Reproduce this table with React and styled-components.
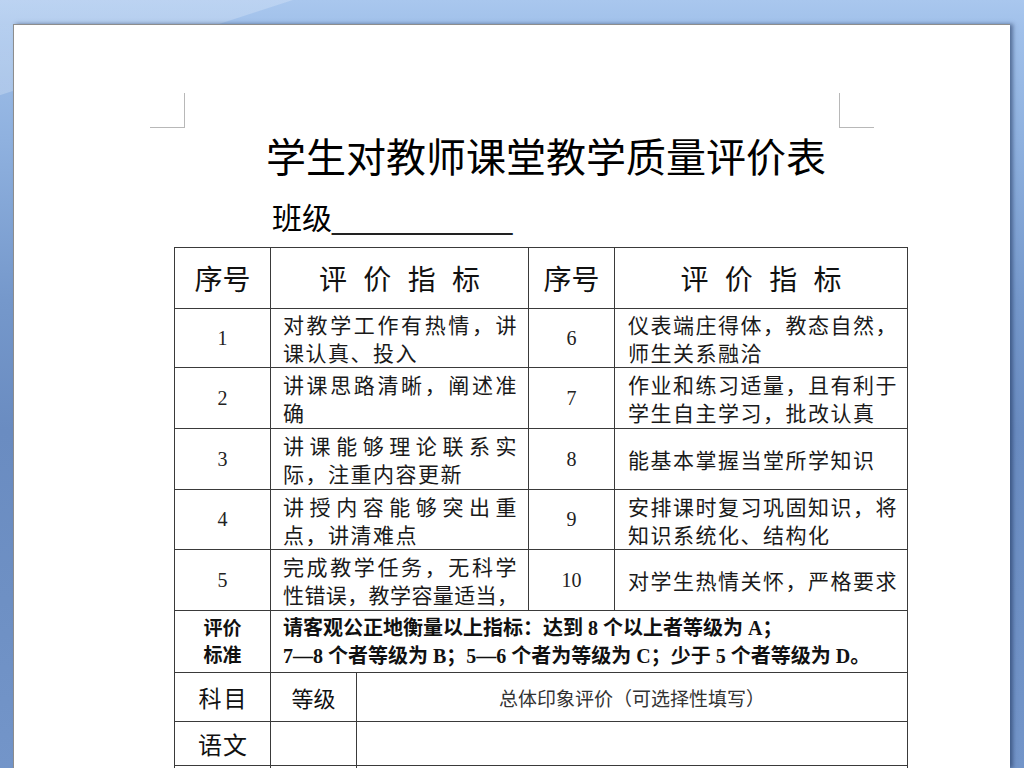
import React from 'react';
import styled, { createGlobalStyle } from 'styled-components';

const GlobalStyle = createGlobalStyle`
  html, body { margin: 0; padding: 0; }
  body {
    width: 1024px;
    height: 768px;
    overflow: hidden;
    font-family: "Noto Sans CJK SC", sans-serif;
    color: #111;
    background:
      linear-gradient(162deg, rgba(255,255,255,0.22) 0, rgba(255,255,255,0.22) 90px, rgba(255,255,255,0) 91px),
      linear-gradient(180deg, #a9c7ee 0px, #a0c0ea 30px, #8fb1df 140px, #7598cb 300px, #6a8cc1 430px, #6e90c4 600px, #7395c9 768px);
  }
`;

const Viewport = styled.div`
  height: 768px;
  box-sizing: border-box;
  padding: 24px 14px 0 13px;
`;

const Page = styled.div`
  height: 744px;
  box-sizing: border-box;
  background: #fff;
  border-top: 1px solid #8d8d8d;
  border-left: 1px solid #8d8d8d;
  box-shadow: 3px 0 4px rgba(25, 45, 85, 0.55);
  padding: 68px 136px 0 136px;
  overflow: hidden;
`;

const MarkRow = styled.div`
  display: flex;
  justify-content: space-between;
`;

const Mark = styled.div`
  width: 35px;
  height: 35px;
  box-sizing: border-box;
  border-bottom: 1px solid #b8b8b8;
  ${(p) => (p.$side === 'left' ? 'border-right: 1px solid #b8b8b8;' : 'border-left: 1px solid #b8b8b8;')}
`;

const Content = styled.div`
  padding: 0 35px 0 34px;
`;

const Title = styled.h1`
  margin: 2px 0 0 0;
  padding-left: 82px;
  font-family: "Noto Sans CJK SC", sans-serif;
  font-size: 40px;
  line-height: 50px;
  font-weight: 400;
  color: #000;
  white-space: nowrap;
`;

const ClassLine = styled.div`
  margin-top: 16px;
  padding-left: 88px;
  font-size: 30px;
  line-height: 40px;
  color: #000;
  white-space: nowrap;
`;

const Blank = styled.span`
  font-family: "Liberation Sans", sans-serif;
  letter-spacing: -0.3px;
  color: #222;
`;

const Table = styled.table`
  margin: 8px 0 0 -10px;
  width: 733px;
  table-layout: fixed;
  border-collapse: collapse;
  border: 1px solid #3a3a3a;
`;

const Row = styled.tr`
  height: ${(p) => p.$h}px;
`;

const Cell = styled.td`
  border: 1px solid #3a3a3a;
  padding: 0;
  vertical-align: middle;
  overflow: hidden;
`;

const HeadCell = styled(Cell)`
  text-align: center;
  font-size: 28px;
  line-height: 36px;
  letter-spacing: ${(p) => (p.$spread ? '5px' : '0')};
  padding-left: ${(p) => (p.$spread ? '5px' : '0')};
  color: #111;
  white-space: nowrap;
`;

const NumCell = styled(Cell)`
  text-align: center;
  font-family: "Liberation Serif", serif;
  font-size: 20px;
  color: #222;
`;

const TextCell = styled(Cell)`
  padding: 0 10px 0 ${(p) => p.$padLeft || 12}px;
  font-size: 21px;
  line-height: 28px;
  letter-spacing: 1.5px;
  color: #1a1a1a;
`;

const Line = styled.div`
  white-space: nowrap;
  text-align: ${(p) => (p.$full ? 'justify' : 'left')};
  text-align-last: ${(p) => (p.$full ? 'justify' : 'left')};
  letter-spacing: ${(p) => (p.$tight ? '0px' : 'inherit')};
`;

const LabelCell = styled(Cell)`
  text-align: center;
  font-family: "Liberation Serif", "Noto Sans CJK SC", serif;
  font-weight: 700;
  font-size: 19px;
  line-height: 27px;
  color: #111;
`;

const CriteriaCell = styled(Cell)`
  padding-left: 12px;
  font-family: "Liberation Serif", "Noto Sans CJK SC", serif;
  font-weight: 700;
  font-size: 20px;
  line-height: 28px;
  color: #111;
`;

const SubjectCell = styled(Cell)`
  text-align: center;
  font-size: ${(p) => p.$size || 24}px;
  letter-spacing: ${(p) => p.$ls || 0}px;
  padding-left: ${(p) => p.$ls || 0}px;
  color: ${(p) => p.$color || '#111'};
  white-space: nowrap;
`;

const rows = [
  {
    h: 59,
    n: '1',
    left: [['对教学工作有热情，讲', true], ['课认真、投入']],
    m: '6',
    right: [['仪表端庄得体，教态自然，'], ['师生关系融洽']],
  },
  {
    h: 61,
    n: '2',
    left: [['讲课思路清晰，阐述准', true], ['确']],
    m: '7',
    right: [['作业和练习适量，且有利于'], ['学生自主学习，批改认真']],
  },
  {
    h: 61,
    n: '3',
    left: [['讲课能够理论联系实', true], ['际，注重内容更新']],
    m: '8',
    right: [['能基本掌握当堂所学知识']],
  },
  {
    h: 60,
    n: '4',
    left: [['讲授内容能够突出重', true], ['点，讲清难点']],
    m: '9',
    right: [['安排课时复习巩固知识，将'], ['知识系统化、结构化']],
  },
  {
    h: 61,
    n: '5',
    left: [['完成教学任务，无科学', true], ['性错误，教学容量适当，', true, true]],
    m: '10',
    right: [['对学生热情关怀，严格要求']],
  },
];

function Lines({ items }) {
  return items.map(([text, full, tight], i) => (
    <Line key={i} $full={full} $tight={tight}>
      {text}
    </Line>
  ));
}

export default function App() {
  return (
    <>
      <GlobalStyle />
      <Viewport>
        <Page>
          <MarkRow>
            <Mark $side="left" />
            <Mark $side="right" />
          </MarkRow>
          <Content>
            <Title>学生对教师课堂教学质量评价表</Title>
            <ClassLine>
              班级<Blank>___________</Blank>
            </ClassLine>
            <Table>
              <colgroup>
                <col style={{ width: '96px' }} />
                <col style={{ width: '86px' }} />
                <col style={{ width: '172px' }} />
                <col style={{ width: '86px' }} />
                <col style={{ width: '293px' }} />
              </colgroup>
              <tbody>
                <Row $h={61}>
                  <HeadCell>序号</HeadCell>
                  <HeadCell colSpan={2} $spread>评 价 指 标</HeadCell>
                  <HeadCell>序号</HeadCell>
                  <HeadCell $spread>评 价 指 标</HeadCell>
                </Row>
                {rows.map((r) => (
                  <Row key={r.n} $h={r.h}>
                    <NumCell>{r.n}</NumCell>
                    <TextCell colSpan={2}>
                      <Lines items={r.left} />
                    </TextCell>
                    <NumCell>{r.m}</NumCell>
                    <TextCell $padLeft={13}>
                      <Lines items={r.right} />
                    </TextCell>
                  </Row>
                ))}
                <Row $h={62}>
                  <LabelCell>
                    <div>评价</div>
                    <div>标准</div>
                  </LabelCell>
                  <CriteriaCell colSpan={4}>
                    <Line>请客观公正地衡量以上指标：达到 8 个以上者等级为 A；</Line>
                    <Line>7—8 个者等级为 B；5—6 个者为等级为 C；少于 5 个者等级为 D。</Line>
                  </CriteriaCell>
                </Row>
                <Row $h={49}>
                  <SubjectCell $size={23} $ls={2}>科目</SubjectCell>
                  <SubjectCell $size={22}>等级</SubjectCell>
                  <SubjectCell colSpan={3} $size={19} $color="#333">
                    总体印象评价（可选择性填写）
                  </SubjectCell>
                </Row>
                <Row $h={44}>
                  <SubjectCell $size={24} $ls={1}>语文</SubjectCell>
                  <SubjectCell />
                  <SubjectCell colSpan={3} />
                </Row>
                <Row $h={44}>
                  <SubjectCell />
                  <SubjectCell />
                  <SubjectCell colSpan={3} />
                </Row>
              </tbody>
            </Table>
          </Content>
        </Page>
      </Viewport>
    </>
  );
}
